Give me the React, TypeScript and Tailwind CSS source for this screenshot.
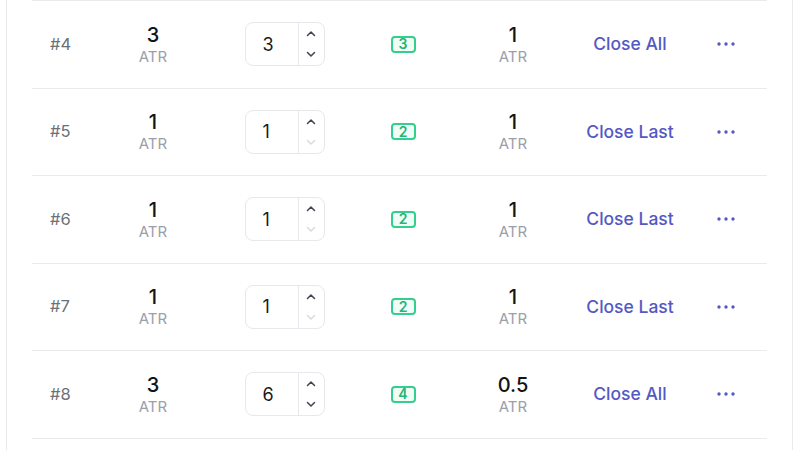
import React from "react";

type Row = { id: number; atr: string; qty: number; badge: number; tp: string; action: string };

const rows: Row[] = [
  { id: 4, atr: "3", qty: 3, badge: 3, tp: "1", action: "Close All" },
  { id: 5, atr: "1", qty: 1, badge: 2, tp: "1", action: "Close Last" },
  { id: 6, atr: "1", qty: 1, badge: 2, tp: "1", action: "Close Last" },
  { id: 7, atr: "1", qty: 1, badge: 2, tp: "1", action: "Close Last" },
  { id: 8, atr: "3", qty: 6, badge: 4, tp: "0.5", action: "Close All" },
];

function Chevron({ up, disabled }: { up: boolean; disabled: boolean }) {
  return (
    <svg width="10" height="7" viewBox="0 0 10 7" fill="none">
      <path
        d={up ? "M1.5 5.5 L5 2 L8.5 5.5" : "M1.5 1.5 L5 5 L8.5 1.5"}
        stroke={disabled ? "#d7dae0" : "#3f4451"}
        strokeWidth="1.5"
        strokeLinecap="round"
        strokeLinejoin="round"
      />
    </svg>
  );
}

function NumberBox({ value }: { value: number }) {
  const minDisabled = value <= 1;
  return (
    <div className="flex h-[44px] w-[80px] rounded-[8px] border border-[#e6e8ec] bg-white">
      <div className="flex w-[53px] items-center border-r border-[#e6e8ec] pl-[17px] text-[18px] text-[#1a1a1a]">
        {value}
      </div>
      <div className="flex flex-1 flex-col items-center justify-between pb-[7px] pt-[7px]">
        <Chevron up disabled={false} />
        <Chevron up={false} disabled={minDisabled} />
      </div>
    </div>
  );
}

function Dots() {
  return (
    <svg width="18" height="4" viewBox="0 0 18 4">
      <circle cx="2" cy="2" r="1.7" fill="#5458c4" />
      <circle cx="9" cy="2" r="1.7" fill="#5458c4" />
      <circle cx="16" cy="2" r="1.7" fill="#5458c4" />
    </svg>
  );
}

function Stat({ value }: { value: string }) {
  return (
    <div className="flex flex-col items-center leading-none">
      <span className="text-[20px] font-medium text-[#141414]">{value}</span>
      <span className="mt-[4px] text-[15px] text-[#9aa0a9]">ATR</span>
    </div>
  );
}

export default function App() {
  return (
    <div
      className="h-[450px] w-[799px] overflow-hidden bg-white px-[6px]"
      style={{ fontFamily: "Inter, 'Noto Sans', sans-serif" }}
    >
      <div className="h-full border-x border-[#e8eaee] px-[25px]">
        <div className="border-t border-[#e8eaee]">
          {rows.map((r) => (
            <div key={r.id} className="flex h-[87.5px] items-center border-b border-[#e8eaee]">
              <div className="w-[68px] pl-[18px] text-[16.5px] text-[#6b7079]">#{r.id}</div>
              <div className="flex w-[106px] justify-center">
                <Stat value={r.atr} />
              </div>
              <div className="flex w-[157px] justify-center">
                <NumberBox value={r.qty} />
              </div>
              <div className="flex w-[80px] justify-center">
                <span className="flex h-[17px] w-[25px] items-center justify-center rounded-[4px] border-2 border-[#34cf8f] bg-[#f2fcf7] text-[14px] font-semibold leading-none text-[#22b478]">
                  {r.badge}
                </span>
              </div>
              <div className="flex w-[140px] justify-center">
                <Stat value={r.tp} />
              </div>
              <div className="flex w-[94px] justify-center whitespace-nowrap text-[17.5px] font-medium text-[#5458c4]">
                {r.action}
              </div>
              <div className="flex flex-1 justify-center pl-[8px]">
                <Dots />
              </div>
            </div>
          ))}
        </div>
      </div>
    </div>
  );
}
